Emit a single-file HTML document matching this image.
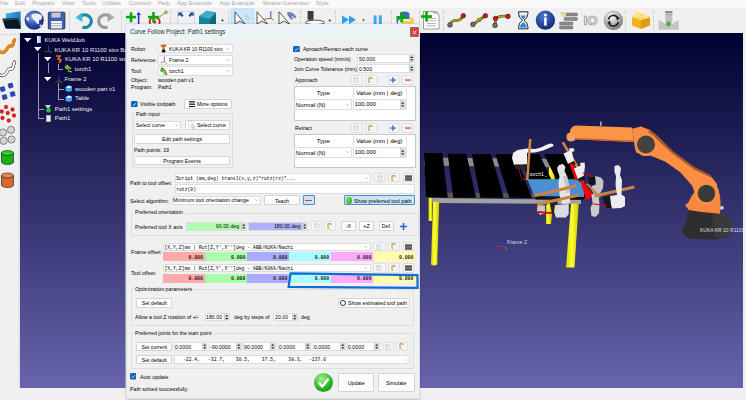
<!DOCTYPE html>
<html><head><meta charset="utf-8">
<style>
*{box-sizing:border-box}
html,body{margin:0;padding:0;width:746px;height:400px;overflow:hidden;background:#f0f0f0;font-family:"Liberation Sans",sans-serif;position:relative}
.a{position:absolute;display:block}
.t{position:absolute;line-height:1;white-space:nowrap;color:#000}
.btn{position:absolute;background:#fdfdfd;border:0.5px solid #d4d4d4;border-radius:1px}
.cmb{position:absolute;background:#ffffff;border:0.5px solid #dcdcdc;border-radius:1px}
.grp{position:absolute;border:0.5px solid #dedede;border-radius:1px}
</style></head><body>

<div class="a" style="left:0;top:0;width:746px;height:8.3px;background:#f9f9f9"></div>
<div class="t" style="left:-1px;top:1.15px;font-size:5.9px;color:#a8a8a8;">File</div>
<div class="t" style="left:15px;top:1.15px;font-size:5.9px;color:#a8a8a8;">Edit</div>
<div class="t" style="left:32.2px;top:1.15px;font-size:5.9px;color:#a8a8a8;">Program</div>
<div class="t" style="left:61.7px;top:1.15px;font-size:5.9px;color:#a8a8a8;">View</div>
<div class="t" style="left:81.8px;top:1.15px;font-size:5.9px;color:#a8a8a8;">Tools</div>
<div class="t" style="left:102px;top:1.15px;font-size:5.9px;color:#a8a8a8;">Utilities</div>
<div class="t" style="left:129px;top:1.15px;font-size:5.9px;color:#a8a8a8;">Connect</div>
<div class="t" style="left:158px;top:1.15px;font-size:5.9px;color:#a8a8a8;">Help</div>
<div class="t" style="left:177px;top:1.15px;font-size:5.9px;color:#a8a8a8;">App Example</div>
<div class="t" style="left:219.5px;top:1.15px;font-size:5.9px;color:#a8a8a8;">App Example</div>
<div class="t" style="left:262.7px;top:1.15px;font-size:5.9px;color:#a8a8a8;">Weave Generator</div>
<div class="t" style="left:315.7px;top:1.15px;font-size:5.9px;color:#a8a8a8;">Style</div>
<div class="a" style="left:0;top:8.3px;width:746px;height:24.7px;background:#f0f0f0"></div>
<div class="a" style="left:69px;top:11px;width:0;height:20px;border-left:0.6px dotted #c4c4c4"></div>
<div class="a" style="left:121px;top:11px;width:0;height:20px;border-left:0.6px dotted #c4c4c4"></div>
<div class="a" style="left:170.4px;top:11px;width:0;height:20px;border-left:0.6px dotted #c4c4c4"></div>
<div class="a" style="left:228px;top:11px;width:0;height:20px;border-left:0.6px dotted #c4c4c4"></div>
<div class="a" style="left:299.6px;top:11px;width:0;height:20px;border-left:0.6px dotted #c4c4c4"></div>
<div class="a" style="left:335px;top:11px;width:0;height:20px;border-left:0.6px dotted #c4c4c4"></div>
<div class="a" style="left:391px;top:11px;width:0;height:20px;border-left:0.6px dotted #c4c4c4"></div>
<div class="a" style="left:418.5px;top:11px;width:0;height:20px;border-left:0.6px dotted #c4c4c4"></div>
<div class="a" style="left:443.3px;top:11px;width:0;height:20px;border-left:0.6px dotted #c4c4c4"></div>
<div class="a" style="left:625.4px;top:11px;width:0;height:20px;border-left:0.6px dotted #c4c4c4"></div>
<div class="a" style="left:652.5px;top:11px;width:0;height:20px;border-left:0.6px dotted #c4c4c4"></div>
<div class="a" style="left:20px;top:32.5px;width:723px;height:355.5px;background:linear-gradient(#000030,#6765ac)"></div>
<div class="a" style="left:20px;top:33px;width:105.5px;height:355px;border-right:0.5px solid #a9aec8"></div>
<div class="a" style="left:0;top:34px;width:19.5px;height:0;border-top:0.6px dotted #c8c8c8"></div>
<div class="a" style="left:18px;top:33px;width:2px;height:355px;background:#e6e6e6"></div>
<svg class="a" style="left:0;top:0" width="746" height="400" viewBox="0 0 746 400">
<defs>
<clipPath id="vp"><rect x="20" y="32.5" width="723" height="355.5"/></clipPath>
<linearGradient id="gLeg" x1="0" y1="0" x2="1" y2="0"><stop offset="0" stop-color="#d8d800"/><stop offset="0.45" stop-color="#ffff30"/><stop offset="1" stop-color="#c8c800"/></linearGradient>
<linearGradient id="gArm" x1="0" y1="0" x2="0" y2="1"><stop offset="0" stop-color="#ffa060"/><stop offset="1" stop-color="#e06a20"/></linearGradient>
</defs>
<g clip-path="url(#vp)">
<!-- back legs -->
<path d="M428.6 198 L432.3 198 L432 221 L428.6 221Z" fill="url(#gLeg)"/>
<!-- back crossbar -->
<path d="M549.5 160 L556 160 L551 224 L546 224Z" fill="url(#gLeg)"/>
<path d="M424 157.5 L560 159 L560 167.6 L424 165.4Z" fill="#8a8a8a"/>
<path d="M426 192.5 L545 193.5 L545 198 L426 197.5Z" fill="#585858"/>
<!-- slats -->
<g fill="#000">
<path d="M423.9 153.1 L442.4 153.1 L447.7 197.8 L426.1 196.9Z"/>
<path d="M447.7 153.7 L466.4 153.7 L476 197.8 L453.3 197.8Z"/>
<path d="M471.7 154 L491 154 L503.7 197.8 L480.4 197.8Z"/>
<path d="M495.3 154 L515 154 L532 198 L509.3 197.8Z"/>
<path d="M519 154 L539.2 154 L560.3 198 L536 198Z"/>
<path d="M544 154 L566 154 L588 198 L565.1 198Z"/>
</g>
<!-- front rail -->
<path d="M432.3 198 L581 199.8 L581 204 L432.3 203Z" fill="#a2a2a2"/>
<!-- front-left leg -->
<path d="M433 202 L439.2 202 L437.2 264.5 Q434 266.5 431 264.5Z" fill="url(#gLeg)"/>
<!-- back-right leg lower part -->
<path d="M546 205 L551 205 L551 223.8 L546 223.8Z" fill="url(#gLeg)"/>
<!-- blue part -->
<path d="M527.5 179.4 L584 179.4 L584 197 L534.4 196.3Z" fill="#4a8ed6"/>
<path d="M527.5 179.4 L584 179.4" stroke="#30c060" stroke-width="0.6"/>
<path d="M534.4 196.5 L584 197.2 L584 199.8 L536 199.6Z" fill="#111"/>
<!-- red little frame + torch label -->
<path d="M518.5 168 L522 179.3 L527 179.3" fill="none" stroke="#e02020" stroke-width="0.7"/>
<text x="529.5" y="176" font-family="Liberation Sans" font-size="5.2" fill="#f0f0f0">torch1</text>
<path d="M545 176.5 L546.5 176.5" stroke="#fff" stroke-width="0.5"/>
<!-- white gripper top-left -->
<path d="M513 153 L517.5 150 L527 148.5 L535 149 L541 147.5 L546 145 L550 143.5 L553 144 L553.5 146 L549 148 L543 150.5 L535 152.5 L527 152.8 L527 164.5 L514 165 L512 158Z" fill="#f2f2f2"/>
<path d="M514.5 164.5 L527 164.5 L526 169 L515.5 169Z" fill="#262626"/>
<!-- vertical stick -->
<path d="M529 139 L531.5 139 L528.5 180 L526 180Z" fill="#d08a40"/>
<!-- upper white clamps and stick -->
<path d="M561.5 142.5 L564 142 L582 172 L579.5 173Z" fill="#d08a40"/>
<path d="M563.5 153.5 L569.5 151 L569 148.5 L573.5 148 L574.5 151 L572 152 L574 161 L568 164Z" fill="#f0f0f0"/>
<path d="M568 164 L574 161 L575.5 164.5 L570 167Z" fill="#151515"/>
<path d="M569.5 163.3 L574 164 L577.7 180.5 L575 180Z" fill="#ff0000"/>
<path d="M574 168.5 L580.7 165.5 L580 163 L584.5 162.5 L585 166 L583.7 176 L577.7 179Z" fill="#f0f0f0"/>
<path d="M577.7 179 L583.7 176 L585.5 180 L579.5 182Z" fill="#151515"/>
<path d="M580 179.5 L583 181 L594.25 196 L586 199.75Z" fill="#ff0000"/>
<path d="M582.25 172.75 L592.75 176.5" stroke="#d00000" stroke-width="0.9"/>
<path d="M588.25 177.25 L596.5 176.5 L594.25 184.75 L589 184Z" fill="#111"/>
<path d="M595 176 L601 177.5 L603.5 181 L603 188 L601 192 L598.5 194.5 L594 194 L591.5 190 L592 186 L596 184.5Z" fill="#c4c4c8"/>
<path d="M591.5 194 L598.5 194.5 L599.5 204 L599 213 L595.5 217 L591.5 216 L590.5 208 L592.5 203Z" fill="#cacace"/>
<path d="M586 184 L588 183.5 L601 196.5 L599 197.5Z" fill="#c88440"/>
<!-- lower clamp parts -->
<path d="M548.75 197.5 L557.5 198 L557.5 216 L552 214Z" fill="#222"/>
<path d="M555 205 L568.75 204 L568.75 214 L566 217.5 L556 217.5 L554 212Z" fill="#dcdce0"/>
<path d="M537.5 205 L545 205.5 L545 213 L540 215 L537 211Z" fill="#c8c8cc"/>
<path d="M537.5 211 L552.5 212.2 L552 214 L538 213Z" fill="#e00000"/>
<path d="M535 203.75 L539 203.5 L538 205.5Z" fill="#e00000"/>
<!-- white clamp 1 upper -->
<path d="M557 168 L559 165 L563 164 L565.5 167 L564.5 171 L567 176 L568.5 183 L570 192 L570 203 L562 204 L559.5 195 L558.5 183 L559.5 176 L558 172Z" fill="#e4e4e8"/>
<path d="M563 176 L567 176 L568.5 183 L570 192 L566 193 L564.5 183Z" fill="#c8c8cc"/>
<!-- front-right leg -->
<path d="M571 203.75 L578.75 203.75 L574.5 267.5 L566 267.5Z" fill="url(#gLeg)"/>
<!-- wooden sticks diag -->
<path d="M534.4 194.2 L576.25 184.2 L576.8 187.2 L534.9 197.2Z" fill="#c88440"/>
<path d="M537 203 L578.75 193.6 L579.3 196.6 L537.5 206Z" fill="#c88440"/>
<path d="M594.25 194.5 L634 185.5 L634.6 188.5 L594.8 197.5Z" fill="#c88440"/>
<!-- right clamp -->
<path d="M614.5 166 L618.5 165 L621 168 L620 175 L622 180 L621.5 194.5 L625 197 L625 206 L621 208 L612 208.5 L610 203 L610 196 L617 195 L615.5 185 L616 176 L614.5 172Z" fill="#ececf0"/>
<path d="M602.5 197.5 L610 196 L611.5 208 L606 208Z" fill="#181818"/>
<path d="M590.5 203.5 L607 205.75" stroke="#e00000" stroke-width="1"/>
<!-- Frame 2 -->
<path d="M505.5 238.8 V246.5" stroke="#1a2aff" stroke-width="0.9"/>
<path d="M495.7 246.5 H505.5" stroke="#e01a1a" stroke-width="0.9"/>
<path d="M505.3 246.8 L506.5 250.5" stroke="#20c020" stroke-width="0.9"/>
<text x="507" y="243.6" font-family="Liberation Sans" font-size="5.4" fill="#d4d4e4">Frame 2</text>
<!-- base -->
<path d="M688.75 210 L720 213.75 L725 213.75 L733.75 222.5 L732.5 227.5 L728.75 236.25 L716.25 239.4 L688.75 238.75 L682.5 232.5 L681.25 228.75 L685 226.25Z" fill="#2e2e2e"/>
<path d="M712.5 213.75 L725 213.75 L733.75 222.5 L732.5 227.5 L728.75 236.25 L716 238 L713 230Z" fill="#3a3a3a"/>
<rect x="720" y="206.25" width="3.5" height="3.2" fill="#d8d8d8"/>
<!-- shoulder -->
<path d="M685 205 L688 203 Q691 196 696 190 L718 188 Q722 200 720 213.75 Q705 213 688.75 210Z" fill="#f58840"/>
<!-- robot lower arm -->
<path d="M636 152.5 L632 128.75 L641 126.5 L650 130 L657.5 136 L672.5 151 L695 167.5 L710 175 L717 184 L718 196 L696 196 L692 185.5 L680 172 L665 161.5 L650 155.5Z" fill="#fb8e42"/>
<path d="M650 130 L657.5 136 L672.5 151 L695 167.5 L710 175 L712 178 L694 169.5 L671 152.5 L656 138.5 L648 132Z" fill="#8a4a18" opacity="0.75"/>
<circle cx="706.5" cy="193" r="12" fill="#fb8e42"/>
<circle cx="706.5" cy="193.5" r="8.75" fill="#3a3a3a"/>
<!-- forearm -->
<path d="M576 125.5 L632 127.5 L634 142 L576.4 139.2 Q569 137 570 131 Q571 126 576 125.5Z" fill="#fb9546"/>
<path d="M576.4 138 L633 140.5 L634 142 L576.4 139.5Z" fill="#c86a2a"/>
<path d="M567.5 133.5 Q571 131.5 574 133.5 L575.5 140 Q571.5 142.5 567.5 140.5 Q565.5 137 567.5 133.5Z" fill="#f8a060"/>
<rect x="600" y="121.5" width="1.6" height="4.3" fill="#b0b0b0"/>
<!-- elbow -->
<circle cx="646" cy="144.5" r="11.5" fill="#fb8e42"/>
<circle cx="646" cy="144.5" r="9" fill="#424242"/>
<text x="700" y="232" font-family="Liberation Sans" font-size="5" fill="#dcdce6">KUKA KR 10 R1100</text>
</g>
</svg>
<svg class="a" style="left:0;top:0" width="746" height="33" viewBox="0 0 746 33">
<defs>
<linearGradient id="gFold" x1="0" y1="0" x2="1" y2="1"><stop offset="0" stop-color="#3fc3f5"/><stop offset="1" stop-color="#0a4a8a"/></linearGradient>
<radialGradient id="gGlobe" cx="0.4" cy="0.35" r="0.7"><stop offset="0" stop-color="#8aa6e6"/><stop offset="0.6" stop-color="#2a4aa8"/><stop offset="1" stop-color="#13266e"/></radialGradient>
<radialGradient id="gInfo" cx="0.4" cy="0.3" r="0.7"><stop offset="0" stop-color="#4a78d0"/><stop offset="1" stop-color="#0c2a78"/></radialGradient>
<radialGradient id="gRef" cx="0.4" cy="0.3" r="0.7"><stop offset="0" stop-color="#ffffff"/><stop offset="1" stop-color="#7a7a7a"/></radialGradient>
</defs>
<!-- folder -->
<path d="M5.5 13.5 L20.5 11.3 L21 27.5 L7 28.8Z" fill="url(#gFold)"/>
<path d="M2.3 18.8 L18 18 L20.8 28.9 L5.5 28.6Z" fill="#0b1824"/>
<path d="M2.3 18.8 L18 18 L18.5 19.5 L3 20.5Z" fill="#2a4a60"/>
<!-- globe -->
<circle cx="34.2" cy="20.2" r="9.6" fill="url(#gGlobe)"/>
<path d="M31.5 15 Q33 13 36 13.5 Q39 13 41.5 15 Q42.5 17 41.5 19 Q40.5 20.5 39.5 19.5 Q38.5 21 39 23.5 Q37.5 25 36.5 23 Q35.5 21 34.5 20.5 Q33 19.5 32.5 18 Q31 17 31.5 15Z" fill="#eef2f8"/>
<path d="M26 18 Q27.5 16.5 29 17.5 Q29.5 19.5 28.5 21.5 Q27 21 26 18Z" fill="#dfe6f4"/>
<path d="M39.5 25 Q41 24 42 25.5 Q41 27 39.8 26.5Z" fill="#dfe6f4"/>
<!-- floppy -->
<rect x="48.3" y="12.2" width="16.6" height="16.8" rx="1" fill="#3d5fb0" stroke="#1b2c5a" stroke-width="0.8"/>
<rect x="51.5" y="12.6" width="9" height="5" fill="#c8c8c8"/>
<rect x="51" y="21" width="11" height="7.4" fill="#f2f2f2"/>
<rect x="51" y="23.3" width="11" height="0.6" fill="#888"/><rect x="51" y="25.6" width="11" height="0.6" fill="#888"/>
<!-- undo -->
<path d="M79.5 18 A6.3 6.3 0 1 1 82.5 27" fill="none" stroke="#178ea0" stroke-width="3.2"/>
<path d="M75.5 17.5 L82 12.5 L82.5 22Z" fill="#3db8d8"/>
<!-- redo -->
<path d="M110.5 18 A6.3 6.3 0 1 0 107.5 27" fill="none" stroke="#9a9a9a" stroke-width="3.2"/>
<path d="M114.5 17.5 L108 12.5 L107.5 22Z" fill="#a8a8a8"/>
<!-- green plus + blue arrow -->
<rect x="125.9" y="15.8" width="10.3" height="2.6" fill="#0aa70a"/><rect x="129.8" y="12.4" width="2.6" height="9.8" fill="#0aa70a"/>
<rect x="137.9" y="14" width="1.5" height="10" fill="#1a2ed8"/><path d="M136.5 15 L138.65 11.7 L140.8 15Z" fill="#1a2ed8"/>
<!-- plus target -->
<circle cx="154.7" cy="22" r="5" fill="none" stroke="#d81818" stroke-width="1.8"/>
<circle cx="154.7" cy="22" r="1.6" fill="#d81818"/>
<rect x="148" y="15.8" width="11" height="2.6" fill="#0aa70a"/><rect x="152.2" y="12" width="2.6" height="10.5" fill="#0aa70a"/>
<path d="M155.4 20 L165.5 12.6" stroke="#4c9a1a" stroke-width="0.8"/><circle cx="166" cy="12.2" r="1.5" fill="#9ad040" stroke="#4c8a1a" stroke-width="0.4"/>
<!-- fit -->
<rect x="177.5" y="11.3" width="17" height="14" fill="#eef2f4" stroke="#c0c0c0" stroke-width="0.5"/>
<path d="M178.3 12.6 L182.5 12.6 L181.6 13.6 L183.6 15.6 L182 17 L180 15 L178.3 16.6Z" fill="#1e48a0"/>
<path d="M193.7 12.6 L189.5 12.6 L190.4 13.6 L188.4 15.6 L190 17 L192 15 L193.7 16.6Z" fill="#1e48a0"/>
<!-- cube -->
<path d="M199 16.4 L206.5 11 L216 12.7 L209.8 19Z" fill="#3ab0c8"/>
<path d="M199 16.4 L209.8 19 L209.8 27 L199 27Z" fill="#10889c"/>
<path d="M209.8 19 L216 12.7 L216 27 L209.8 27Z" fill="#0c6c80"/>
<path d="M199 16.4 L206.5 11 L216 12.7 L209.8 19Z M209.8 19 V27" fill="none" stroke="#0a5060" stroke-width="0.35"/>
<path d="M221 19.8 L224 19.8 L222.5 21.8Z" fill="#222"/>
<!-- selected -->
<rect x="231.2" y="8.8" width="22.6" height="22" rx="0.8" fill="#cce8ff" stroke="#99d1ff" stroke-width="0.5"/>
<path d="M235 11.8 L235 24 L240 21 L245.6 24.5Z" fill="#fff" stroke="#111" stroke-width="0.7"/>
<path d="M246.4 14 L246.4 19.6 L247.8 18.4 L249.8 19.8Z" fill="#ddd" stroke="#999" stroke-width="0.3"/>
<!-- arrow + frame -->
<path d="M257 11.8 L257 24 L262 21 L268 24.5Z" fill="#fff" stroke="#111" stroke-width="0.7"/>
<path d="M270.8 11.2 L270.8 18.5" stroke="#3030d0" stroke-width="0.9"/><path d="M264 19.3 L270.8 18.3" stroke="#d83030" stroke-width="0.9"/><path d="M270.8 18.3 L273.7 20" stroke="#20a040" stroke-width="0.9"/>
<!-- arrow + gripper -->
<path d="M279 11.8 L279 24 L284 21 L290 24.5Z" fill="#fff" stroke="#111" stroke-width="0.7"/>
<path d="M287 12.5 Q291 11 294 14 L296.5 17 L295 18.5 L291.5 15.5 L293 19 L291 19.8 L287.5 15Z" fill="#7080b8"/>
<!-- tool -->
<rect x="307.6" y="11" width="5.9" height="8.8" fill="#3a3a3a"/><rect x="308.6" y="19.5" width="3.9" height="1.5" fill="#666"/>
<ellipse cx="315" cy="22.4" rx="9.6" ry="2.2" fill="#fff" stroke="#111" stroke-width="0.7"/>
<path d="M328.3 19.8 L331.2 19.8 L329.75 21.8Z" fill="#222"/>
<!-- play/pause -->
<path d="M342 15.4 L349 19.7 L342 24Z M349 15.4 L356 19.7 L349 24Z" fill="#2a9ef0"/>
<path d="M362.2 19.5 L364.8 19.5 L363.5 21.3Z" fill="#222"/>
<rect x="373.6" y="15.4" width="3" height="9" fill="#3aa8f0"/><rect x="378.8" y="15.4" width="3" height="9" fill="#3aa8f0"/>
<!-- python + -->
<path d="M400 14 Q400 11.5 404 11.5 Q409.5 11.5 409.5 14 L409.5 19 L402 19 Q398 19 398 22 L398 24 Q396.5 24 396.5 20 Q396.5 16 400 16Z" fill="#3a70b0"/>
<path d="M410 17 Q414 17 414 21 Q414 26 409 26 L405 26 Q402 26 402 24 L402 21 L409 21 Q410 21 410 17Z" fill="#f4d44a"/>
<rect x="396.5" y="16" width="10.3" height="2.6" fill="#0aa70a"/><rect x="400.4" y="12" width="2.6" height="10.5" fill="#0aa70a"/>
<!-- doc + -->
<path d="M423.5 11.5 L435.5 11.5 L439 15 L439 29 L423.5 29Z" fill="#fafafa" stroke="#444" stroke-width="0.5"/>
<path d="M433 11.5 L437.5 11.5 L439 13.5 L433 13.5Z" fill="#b8a0e0"/>
<rect x="427" y="18" width="9" height="0.7" fill="#999"/><rect x="427" y="20.5" width="9" height="0.7" fill="#999"/><rect x="427" y="23" width="9" height="0.7" fill="#999"/><rect x="427" y="25.5" width="9" height="0.7" fill="#999"/>
<rect x="421" y="15.2" width="11" height="2.6" fill="#0aa70a"/><rect x="425.2" y="11.5" width="2.6" height="10" fill="#0aa70a"/>
<!-- curves -->
<g fill="none" stroke-linecap="round">
<path d="M450 24.5 Q452 20 456 20.5 Q460 21 463.3 15.7" stroke="#3a3a10" stroke-width="2.6"/>
<path d="M473 24.4 L485.4 15.7" stroke="#3a3a10" stroke-width="2.6"/>
<path d="M495 25 L495.5 18.5 Q500 15 508 16.4" stroke="#3a3a10" stroke-width="2.6"/>
<path d="M450 24.5 Q452 20 456 20.5 Q460 21 463.3 15.7" stroke="#b8a818" stroke-width="1.6"/>
<path d="M473 24.4 L485.4 15.7" stroke="#b8a818" stroke-width="1.6"/>
<path d="M495 25 L495.5 18.5 Q500 15 508 16.4" stroke="#b8a818" stroke-width="1.6"/>
</g>
<path d="M477.5 18.5 L482.5 17.5 L480 22Z" fill="#b8a818" stroke="#3a3a10" stroke-width="0.4"/>
<g stroke="#222" stroke-width="0.6">
<circle cx="450" cy="24.9" r="2.4" fill="#707070"/><circle cx="463.3" cy="15.7" r="2.3" fill="#d81010"/>
<circle cx="473" cy="24.4" r="2.4" fill="#707070"/><circle cx="485.4" cy="15.7" r="2.3" fill="#d81010"/>
<circle cx="495" cy="25.4" r="2.4" fill="#707070"/><circle cx="495.5" cy="18.5" r="2.3" fill="#d81010"/><circle cx="508" cy="16.4" r="2.3" fill="#d81010"/>
</g>
<!-- hourglass -->
<path d="M518.5 11.8 L528 11.8 L528 13 Q528 18 524 20.2 Q528 22.5 528 27.5 L528 28.8 L518.5 28.8 L518.5 27.5 Q518.5 22.5 522.5 20.2 Q518.5 18 518.5 13Z" fill="#e8f4fc" stroke="#111" stroke-width="0.9"/>
<path d="M520.5 15.5 L526 15.5 Q525 18.5 523.25 19.5 Q521.5 18.5 520.5 15.5Z M523.25 22 Q526.5 24 527 27.5 L519.5 27.5 Q520 24 523.25 22Z" fill="#2a8ad8"/>
<!-- info -->
<circle cx="545.4" cy="20.2" r="9.6" fill="url(#gInfo)"/>
<circle cx="545.4" cy="15" r="1.5" fill="#fff"/><rect x="544.1" y="17.6" width="2.6" height="8" fill="#fff"/>
<!-- list -->
<rect x="564" y="13" width="13.5" height="3" rx="1" fill="#8a8a8a" stroke="#555" stroke-width="0.4"/>
<rect x="564" y="17.5" width="13.5" height="3" rx="1" fill="#8a8a8a" stroke="#555" stroke-width="0.4"/>
<rect x="559.5" y="22" width="13.5" height="3" rx="1" fill="#8a8a8a" stroke="#555" stroke-width="0.4"/>
<rect x="559.5" y="26" width="13.5" height="3" rx="1" fill="#8a8a8a" stroke="#555" stroke-width="0.4"/>
<path d="M560 12 L566 12 L566 16 Q563 18 561 15Z" fill="#e8d8a0"/>
<!-- IO -->
<text x="583.5" y="25.3" font-family="Liberation Sans" font-weight="bold" font-size="12" fill="#fff" stroke="#777" stroke-width="0.6" textLength="14" lengthAdjust="spacingAndGlyphs">IO</text>
<!-- refresh -->
<circle cx="613.4" cy="20.5" r="9.5" fill="url(#gRef)" stroke="#888" stroke-width="0.4"/>
<path d="M608.5 19.5 A5 5 0 0 1 618 18.5" fill="none" stroke="#222" stroke-width="1.7"/><path d="M618.3 22 A5 5 0 0 1 608.8 23" fill="none" stroke="#222" stroke-width="1.7"/>
<path d="M616 16.5 L620 18 L617 20.5Z M611 24.5 L607 23 L610 20.5Z" fill="#222"/>
<!-- box -->
<path d="M632 17 L641 20 L641 29 L632 25.5Z" fill="#f0b020"/><path d="M641 20 L650 17 L650 25.5 L641 29Z" fill="#e09a10"/>
<path d="M632 17 L637 12 L645 14.5 L650 17 L641 20Z" fill="#ffd860"/>
<path d="M637 12 L641 16 L634 18Z M645 14.5 L641 16 L649 19Z" fill="#ffe890"/>
<!-- tool2 -->
<rect x="665.3" y="11" width="7" height="12" fill="#c0c0c0"/><rect x="665.3" y="11" width="7" height="2" fill="#8a8a8a"/><rect x="665.3" y="14.5" width="7" height="0.6" fill="#999"/>
<path d="M658.7 20 L668.8 26 L678.7 20 L678.7 29.8 L658.7 29.8Z" fill="#c4c4c4"/>
<path d="M665.5 24 L668.5 21 L671.5 24 L668.5 27Z" fill="#40b040"/>
</svg>
<svg class="a" style="left:0;top:34px" width="20" height="160" viewBox="0 34 20 160">
<path d="M0.5 52 Q4 54 7 49 Q9 45 11 46 Q13 47 13.5 42 L14.5 40" fill="none" stroke="#c85a00" stroke-width="3.2" stroke-linecap="round"/>
<path d="M0.5 52 Q4 54 7 49 Q9 45 11 46 Q13 47 13.5 42 L14.5 40" fill="none" stroke="#f08a10" stroke-width="2.2" stroke-linecap="round"/>
<path d="M0.8 75 Q4 77 7 72 Q9 68 11 69 Q13 70 13.5 65 L14.5 62" fill="none" stroke="#333" stroke-width="3.2" stroke-linecap="round"/>
<path d="M0.8 75 Q4 77 7 72 Q9 68 11 69 Q13 70 13.5 65 L14.5 62" fill="none" stroke="#fff" stroke-width="2" stroke-linecap="round"/>
<g fill="#2a48d0" stroke="#0a1a80" stroke-width="0.5">
<rect x="0.5" y="87" width="4.2" height="4.2" transform="rotate(-15 2.6 89)"/>
<rect x="8.5" y="83.5" width="4.2" height="4.2" transform="rotate(-15 10.6 85.6)"/>
<rect x="2.5" y="95" width="4.2" height="4.2" transform="rotate(-15 4.6 97)"/>
<rect x="10.5" y="92" width="4.2" height="4.2" transform="rotate(-15 12.6 94)"/>
</g>
<g fill="#e81c1c" stroke="#901010" stroke-width="0.3"><circle cx="6" cy="107" r="1.9"/><circle cx="12.5" cy="109.5" r="1.9"/><circle cx="1.8" cy="111.5" r="1.9"/><circle cx="7.8" cy="113" r="1.9"/><circle cx="14" cy="115.5" r="1.9"/><circle cx="2.5" cy="118" r="1.9"/><circle cx="8.8" cy="120.5" r="1.9"/></g>
<g fill="#d4d4d4" stroke="#444" stroke-width="0.6"><circle cx="3" cy="132.5" r="3.6"/><circle cx="11" cy="129.8" r="3.6"/><circle cx="3.6" cy="140.8" r="3.6"/><circle cx="11.5" cy="139.5" r="3.6"/></g>
<path d="M1.5 153 L1.5 162 A6 2.5 0 0 0 13.5 162 L13.5 153Z" fill="#18b018" stroke="#111" stroke-width="0.6"/>
<ellipse cx="7.5" cy="153" rx="6" ry="2.5" fill="#30d030" stroke="#111" stroke-width="0.6"/>
<path d="M1.5 175.5 L1.5 185 A6 2.5 0 0 0 13.5 185 L13.5 175.5Z" fill="#d86a30" stroke="#111" stroke-width="0.6"/>
<ellipse cx="7.5" cy="175.5" rx="6" ry="2.5" fill="#e88a50" stroke="#111" stroke-width="0.6"/>
</svg>
<div class="a" style="left:20px;top:33px;width:105.5px;height:355px;overflow:hidden">
</div>
<svg class="a" style="left:24px;top:37.70px" width="7.2" height="4.2" viewBox="0 0 7.2 4.2"><path d="M0 0 L7.2 0 L3.6 4.2Z" fill="#fff"/></svg>
<div class="a" style="left:36.5px;top:36.3px;width:4.5px;height:7px;background:linear-gradient(90deg,#fff,#8ab0e0)"></div>
<div class="t" style="left:44.5px;top:37.85px;font-size:5.9px;color:#eeeef4">KUKA WeldJob</div>
<svg class="a" style="left:34px;top:47.40px" width="7.2" height="4.2" viewBox="0 0 7.2 4.2"><path d="M0 0 L7.2 0 L3.6 4.2Z" fill="#fff"/></svg>
<div class="t" style="left:54.6px;top:47.55px;font-size:5.9px;color:#eeeef4">KUKA KR 10 R1100 sixx Base</div>
<svg class="a" style="left:44px;top:45px" width="9" height="9" viewBox="0 0 9 9"><path d="M4.5 0.5 V6" stroke="#3a3aff" stroke-width="0.8"/><path d="M0.5 7 L4.5 6" stroke="#e03030" stroke-width="0.8"/><path d="M4.5 6 L8 7.5" stroke="#30b030" stroke-width="0.8"/></svg>
<svg class="a" style="left:44px;top:57.30px" width="7.2" height="4.2" viewBox="0 0 7.2 4.2"><path d="M0 0 L7.2 0 L3.6 4.2Z" fill="#fff"/></svg>
<div class="t" style="left:65px;top:57.45px;font-size:5.9px;color:#eeeef4">KUKA KR 10 R1100 sixx</div>
<svg class="a" style="left:55px;top:55px" width="7" height="9" viewBox="0 0 7 9"><path d="M1 1 L5 1 L3 4 L6 5 L4 8" fill="none" stroke="#e07010" stroke-width="1.6"/></svg>
<svg class="a" style="left:63.5px;top:64px" width="9" height="9" viewBox="0 0 9 9"><path d="M1 2 L5 6 M2.5 1 L7 5 M4 7 L8 8" stroke="#d0d020" stroke-width="1.1"/><circle cx="2.5" cy="3.5" r="1.7" fill="#40c040"/></svg>
<div class="t" style="left:74.8px;top:66.95px;font-size:5.9px;color:#eeeef4">torch1</div>
<svg class="a" style="left:44.3px;top:76.60px" width="7.2" height="4.2" viewBox="0 0 7.2 4.2"><path d="M0 0 L7.2 0 L3.6 4.2Z" fill="#fff"/></svg>
<div class="t" style="left:64.5px;top:76.85px;font-size:5.9px;color:#eeeef4">Frame 2</div>
<svg class="a" style="left:54.8px;top:74.5px" width="8" height="9" viewBox="0 0 8 9"><path d="M4 0.5 V6" stroke="#3a3aff" stroke-width="0.8"/><path d="M0.5 7 L4 6" stroke="#e03030" stroke-width="0.8"/><path d="M4 6 L7.5 7.5" stroke="#30b030" stroke-width="0.8"/></svg>
<svg class="a" style="left:64.5px;top:85.00px" width="7.5" height="7.5" viewBox="0 0 8 8"><path d="M0.5 2.5 L4 0.5 L7.5 2 L7.5 6 L4 7.5 L0.5 6Z" fill="#3aa0f0"/><path d="M0.5 2.5 L4 0.5 L7.5 2 L4 3.5Z" fill="#d8f0ff"/></svg>
<div class="t" style="left:75px;top:86.65px;font-size:5.9px;color:#eeeef4">wooden part v1</div>
<svg class="a" style="left:64.5px;top:94.70px" width="7.5" height="7.5" viewBox="0 0 8 8"><path d="M0.5 2.5 L4 0.5 L7.5 2 L7.5 6 L4 7.5 L0.5 6Z" fill="#3aa0f0"/><path d="M0.5 2.5 L4 0.5 L7.5 2 L4 3.5Z" fill="#d8f0ff"/></svg>
<div class="t" style="left:75px;top:96.35px;font-size:5.9px;color:#eeeef4">Table</div>
<svg class="a" style="left:44.3px;top:104px" width="8" height="9" viewBox="0 0 8 9"><path d="M1 1 L7 1 L5 4 L3 4Z" fill="#ccc"/><circle cx="4.5" cy="6.3" r="2.4" fill="#20c030"/></svg>
<div class="t" style="left:54.8px;top:106.55px;font-size:5.9px;color:#eeeef4">Path1 settings</div>
<div class="a" style="left:45.5px;top:114.5px;width:5px;height:7px;background:#e8e8e8;border:0.4px solid #aaa"></div>
<div class="t" style="left:54.8px;top:115.85px;font-size:5.9px;color:#eeeef4">Path1</div>
<div class="a" style="left:37.5px;top:53px;width:0;height:65.3px;border-left:0.6px solid #9a9ab8"></div>
<div class="a" style="left:37.5px;top:108.6px;width:6px;height:0;border-top:0.6px solid #9a9ab8"></div>
<div class="a" style="left:37.5px;top:118px;width:6px;height:0;border-top:0.6px solid #9a9ab8"></div>
<div class="a" style="left:48px;top:63px;width:0;height:10px;border-left:0.6px solid #9a9ab8"></div>
<div class="a" style="left:58.2px;top:64px;width:0;height:5px;border-left:0.6px solid #9a9ab8"></div>
<div class="a" style="left:58.2px;top:69px;width:5px;height:0;border-top:0.6px solid #9a9ab8"></div>
<div class="a" style="left:58.2px;top:83px;width:0;height:15.5px;border-left:0.6px solid #9a9ab8"></div>
<div class="a" style="left:58.2px;top:88.8px;width:5.5px;height:0;border-top:0.6px solid #9a9ab8"></div>
<div class="a" style="left:58.2px;top:98.5px;width:5.5px;height:0;border-top:0.6px solid #9a9ab8"></div>
<div class="a" style="left:125.5px;top:24px;width:294.5px;height:375px;background:#f0f0f0;border:0.5px solid #d8dee2;border-top-color:#e8eef2;border-radius:1.5px 1.5px 0 0;box-shadow:0 0.5px 2.5px rgba(0,0,0,.22)"></div>
<div class="a" style="left:126px;top:24.5px;width:293.5px;height:14.7px;background:#edf4f7"></div>
<div class="t" style="left:130px;top:29.2px;font-size:6.6px;transform:scaleX(0.895);transform-origin:left center;color:#2a2a2a">Curve Follow Project: Path1 settings</div>
<div class="a" style="left:409.5px;top:27.3px;width:9.6px;height:10px;background:#c94f4f;border-radius:0.8px"></div>
<svg class="a" style="left:411.9px;top:29.8px" width="5" height="5" viewBox="0 0 5 5"><path d="M0.9 0.9 L4.1 4.1 M4.1 0.9 L0.9 4.1" stroke="#fff" stroke-width="0.8"/></svg>
<div class="t" style="left:131.4px;top:46.78px;font-size:5.880px;transform:scaleX(0.8929);transform-origin:left center;">Robot:</div>
<div class="cmb" style="left:157.8px;top:43.9px;width:74.80px;height:9.60px;"></div>
<div class="t" style="left:169px;top:46.93px;font-size:5.544px;transform:scaleX(0.8929);transform-origin:left center;">KUKA KR 10 R1100 sixx</div>
<svg class="a" style="left:226.40px;top:47.85px" width="3.4" height="2.3" viewBox="0 0 3.4 2.3"><path d="M0.3 0.3 L1.7 1.7 L3.1 0.3" fill="none" stroke="#8a8a8a" stroke-width="0.5"/></svg>
<div class="t" style="left:131.4px;top:57.98px;font-size:5.880px;transform:scaleX(0.8929);transform-origin:left center;">Reference:</div>
<div class="cmb" style="left:157.8px;top:55px;width:74.80px;height:9.70px;"></div>
<div class="t" style="left:169px;top:57.93px;font-size:5.880px;transform:scaleX(0.8929);transform-origin:left center;">Frame 2</div>
<svg class="a" style="left:226.40px;top:59.00px" width="3.4" height="2.3" viewBox="0 0 3.4 2.3"><path d="M0.3 0.3 L1.7 1.7 L3.1 0.3" fill="none" stroke="#8a8a8a" stroke-width="0.5"/></svg>
<div class="t" style="left:131.4px;top:69.08px;font-size:5.880px;transform:scaleX(0.8929);transform-origin:left center;">Tool:</div>
<div class="cmb" style="left:157.8px;top:66px;width:74.80px;height:10.00px;"></div>
<div class="t" style="left:169px;top:69.08px;font-size:5.880px;transform:scaleX(0.8929);transform-origin:left center;">torch1</div>
<svg class="a" style="left:226.40px;top:70.15px" width="3.4" height="2.3" viewBox="0 0 3.4 2.3"><path d="M0.3 0.3 L1.7 1.7 L3.1 0.3" fill="none" stroke="#8a8a8a" stroke-width="0.5"/></svg>
<svg class="a" style="left:160.3px;top:44.4px" width="7" height="8.6" viewBox="0 0 7 8.6"><path d="M0.8 1.6 Q2 0.6 5 0.8 Q6.5 1 6.3 2.2 L3.8 3 L4.8 4.6 Q3 5.4 2.2 4.2 L3.2 3 L1 2.8Z" fill="#e06a20" stroke="#8a3a10" stroke-width="0.3"/><ellipse cx="3.6" cy="6.9" rx="2" ry="1.6" fill="#1a1410"/><path d="M2.6 4.8 L4.6 4.8 L4.4 5.8 L2.8 5.8Z" fill="#c05818"/></svg>
<svg class="a" style="left:160.3px;top:55.8px" width="7" height="8.2" viewBox="0 0 7 8.2"><path d="M4.3 0.3 V5.6" stroke="#5050e8" stroke-width="0.8"/><path d="M0.3 7 L4.3 5.6" stroke="#e05050" stroke-width="0.8"/><path d="M4.3 5.6 L6.8 7.8" stroke="#40a060" stroke-width="0.8"/></svg>
<svg class="a" style="left:160.3px;top:66.6px" width="7.5" height="8.6" viewBox="0 0 7.5 8.6"><path d="M0.8 1.2 Q3.5 0.8 5 3.5 L7 7.8" fill="none" stroke="#6a6a18" stroke-width="1.2"/><path d="M0.6 3.2 Q3 3.4 4.2 5.8 L5.8 8.3" fill="none" stroke="#8a8a20" stroke-width="1.2"/><circle cx="2" cy="3.5" r="1.7" fill="#30c030"/></svg>
<div class="t" style="left:131.4px;top:78.08px;font-size:5.880px;transform:scaleX(0.8929);transform-origin:left center;">Object:</div>
<div class="t" style="left:157.6px;top:78.08px;font-size:5.880px;transform:scaleX(0.8929);transform-origin:left center;">wooden part v1</div>
<div class="t" style="left:131.4px;top:85.08px;font-size:5.880px;transform:scaleX(0.8929);transform-origin:left center;">Program:</div>
<div class="t" style="left:157.6px;top:85.08px;font-size:5.880px;transform:scaleX(0.8929);transform-origin:left center;">Path1</div>
<svg class="a" style="left:131.2px;top:100.5px" width="6.60" height="6.50" viewBox="0 0 10 10" preserveAspectRatio="none"><rect x="0" y="0" width="10" height="10" rx="2" fill="#1565c0"/><path d="M2.6 5.2 L4.3 6.9 L7.5 3.2" fill="none" stroke="#fff" stroke-width="1"/></svg>
<div class="t" style="left:140.4px;top:102.08px;font-size:5.880px;transform:scaleX(0.8929);transform-origin:left center;">Visible toolpath</div>
<div class="btn" style="left:183.7px;top:99px;width:48.50px;height:9.90px;"></div>
<svg class="a" style="left:188.6px;top:100.6px" width="6.2" height="6.4" viewBox="0 0 6.2 6.4"><rect x="0" y="0.2" width="6.2" height="1.2" fill="#111"/><rect x="0" y="2.6" width="6.2" height="1.2" fill="#111"/><rect x="0" y="5" width="6.2" height="1.2" fill="#111"/></svg>
<div class="t" style="left:196.5px;top:102.08px;font-size:5.880px;transform:scaleX(0.8929);transform-origin:left center;">More options</div>
<div class="grp" style="left:131.8px;top:113.4px;width:101.2px;height:54.8px"></div>
<div class="a" style="left:134.5px;top:111px;width:24px;height:5px;background:#f0f0f0"></div>
<div class="t" style="left:135.6px;top:111.67px;font-size:5.880px;transform:scaleX(0.8929);transform-origin:left center;">Path input</div>
<div class="cmb" style="left:134px;top:120.5px;width:47.00px;height:9.20px;"></div>
<div class="t" style="left:135.5px;top:123.17px;font-size:5.880px;transform:scaleX(0.8929);transform-origin:left center;">Select curve</div>
<svg class="a" style="left:174.80px;top:124.25px" width="3.4" height="2.3" viewBox="0 0 3.4 2.3"><path d="M0.3 0.3 L1.7 1.7 L3.1 0.3" fill="none" stroke="#8a8a8a" stroke-width="0.5"/></svg>
<div class="btn" style="left:184.8px;top:119.6px;width:45.20px;height:10.70px;"></div>
<svg class="a" style="left:188px;top:121px" width="8" height="8" viewBox="0 0 8 8"><path d="M0.5 0.5 H4 L5.5 2 V6 H0.5Z" fill="#f5f5f5" stroke="#bbb" stroke-width="0.4"/><path d="M4 3.5 L4 7.5 L5 6.6 L5.8 7.8 L6.4 7.5 L5.7 6.3 L6.9 6.2Z" fill="#fff" stroke="#777" stroke-width="0.35"/></svg>
<div class="t" style="left:197px;top:123.28px;font-size:5.880px;transform:scaleX(0.8929);transform-origin:left center;">Select curve</div>
<div class="btn" style="left:134.4px;top:134px;width:96.10px;height:9.60px;"></div>
<div class="t" style="left:134.4px;width:96.10px;text-align:center;top:136.88px;font-size:5.880px;transform:scaleX(0.8929);transform-origin:center center;">Edit path settings</div>
<div class="t" style="left:134px;top:148.07px;font-size:5.880px;transform:scaleX(0.8929);transform-origin:left center;">Path points: 19</div>
<div class="btn" style="left:134.4px;top:155.9px;width:96.10px;height:9.60px;"></div>
<div class="t" style="left:134.4px;width:96.10px;text-align:center;top:158.77px;font-size:5.880px;transform:scaleX(0.8929);transform-origin:center center;">Program Events</div>
<svg class="a" style="left:293.3px;top:45.6px" width="6.80" height="6.70" viewBox="0 0 10 10" preserveAspectRatio="none"><rect x="0" y="0" width="10" height="10" rx="2" fill="#1565c0"/><path d="M2.6 5.2 L4.3 6.9 L7.5 3.2" fill="none" stroke="#fff" stroke-width="1"/></svg>
<div class="t" style="left:302.5px;top:47.08px;font-size:5.880px;transform:scaleX(0.8929);transform-origin:left center;">Aproach/Retract each curve</div>
<div class="t" style="left:293.5px;top:56.68px;font-size:5.880px;transform:scaleX(0.8929);transform-origin:left center;">Operation speed (mm/s)</div>
<div class="cmb" style="left:357px;top:54px;width:58.00px;height:9.30px;background:#ffffff;"></div>
<div class="t" style="left:358.5px;top:56.73px;font-size:5.880px;transform:scaleX(0.8929);transform-origin:left center;">50.000</div>
<div class="a" style="left:409.00px;top:54.50px;width:5.5px;height:8.30px;background:#dedede;border-left:0.4px solid #cfcfcf"></div>
<svg class="a" style="left:409.00px;top:54.00px" width="6" height="9.30" viewBox="0 0 6 9.30"><path d="M1.25 3.95 L2.75 2.25 L4.25 3.95Z M1.25 5.35 L2.75 7.05 L4.25 5.35Z" fill="#222"/></svg>
<div class="t" style="left:293.5px;top:66.78px;font-size:5.880px;transform:scaleX(0.8929);transform-origin:left center;">Join Curve Tolerance (mm)</div>
<div class="cmb" style="left:357px;top:64px;width:58.00px;height:9.20px;background:#ffffff;"></div>
<div class="t" style="left:358.5px;top:66.67px;font-size:5.880px;transform:scaleX(0.8929);transform-origin:left center;">0.500</div>
<div class="a" style="left:409.00px;top:64.50px;width:5.5px;height:8.20px;background:#dedede;border-left:0.4px solid #cfcfcf"></div>
<svg class="a" style="left:409.00px;top:64.00px" width="6" height="9.20" viewBox="0 0 6 9.20"><path d="M1.25 3.90 L2.75 2.20 L4.25 3.90Z M1.25 5.30 L2.75 7.00 L4.25 5.30Z" fill="#222"/></svg>
<div class="t" style="left:295px;top:78.08px;font-size:5.880px;transform:scaleX(0.8929);transform-origin:left center;">Approach</div>
<div class="btn" style="left:350.8px;top:75.2px;width:11.20px;height:9.60px;background:#f6f6f6;border-color:#e0e0e0;"></div>
<svg class="a" style="left:353.40px;top:77.00px" width="6" height="6" viewBox="0 0 6 6"><rect x="0.7" y="0.6" width="3.6" height="4" fill="#e8e8e8" stroke="#c8c8c8" stroke-width="0.4"/><rect x="1.7" y="1.6" width="3.6" height="4" fill="#ececec" stroke="#c4c4c4" stroke-width="0.4"/></svg>
<div class="btn" style="left:365px;top:75.2px;width:11.60px;height:9.60px;background:#f6f6f6;border-color:#e0e0e0;"></div>
<svg class="a" style="left:367.80px;top:76.80px" width="6" height="6.5" viewBox="0 0 6 6.5"><rect x="0.8" y="0.8" width="3.6" height="5" fill="#f1c48a" stroke="#c8843a" stroke-width="0.5"/><rect x="2.2" y="2" width="3" height="4" fill="#fff" stroke="#d0d0d0" stroke-width="0.4"/><rect x="1.5" y="0.3" width="2" height="1" fill="#999"/></svg>
<div class="btn" style="left:388px;top:75.2px;width:10.70px;height:9.60px;background:#f6f6f6;border-color:#e0e0e0;"></div>
<svg class="a" style="left:390.35px;top:77.00px" width="6" height="6" viewBox="0 0 6 6"><rect x="0.2" y="2.4" width="5.6" height="1.3" fill="#1f6fc5"/><rect x="2.35" y="0.2" width="1.3" height="5.6" fill="#1f6fc5"/></svg>
<div class="btn" style="left:402px;top:75.2px;width:11.00px;height:9.60px;background:#f6f6f6;border-color:#e0e0e0;"></div>
<svg class="a" style="left:404.50px;top:77.00px" width="6" height="6" viewBox="0 0 6 6"><rect x="0.2" y="2.4" width="5.6" height="1.3" fill="#e03c3c"/></svg>
<div class="a" style="left:293.5px;top:85.8px;width:122.1px;height:34.8px;background:#ffffff;border:0.5px solid #c8c8c8"></div>
<div class="a" style="left:352.5px;top:86.3px;width:0;height:12px;border-left:0.5px solid #e0e0e0"></div>
<div class="a" style="left:406px;top:86.3px;width:0;height:24px;border-left:0.5px solid #e8e8e8"></div>
<div class="t" style="left:294px;width:58.5px;text-align:center;top:90.10px;font-size:6px">Type</div>
<div class="t" style="left:352.5px;width:53.5px;text-align:center;top:90.10px;font-size:6.1px">Value (mm | deg)</div>
<div class="cmb" style="left:294px;top:99.0px;width:58.00px;height:11.00px;"></div>
<div class="t" style="left:295.6px;top:102.15px;font-size:6.1px;">Normal (N)</div>
<svg class="a" style="left:345.80px;top:103.65px" width="3.4" height="2.3" viewBox="0 0 3.4 2.3"><path d="M0.3 0.3 L1.7 1.7 L3.1 0.3" fill="none" stroke="#8a8a8a" stroke-width="0.5"/></svg>
<div class="cmb" style="left:353px;top:99.0px;width:52.50px;height:11.00px;background:#ffffff;"></div>
<div class="t" style="left:354.8px;top:102.25px;font-size:5.9px;">100.000</div>
<div class="a" style="left:399.50px;top:99.50px;width:5.5px;height:10.00px;background:#dedede;border-left:0.4px solid #cfcfcf"></div>
<svg class="a" style="left:399.50px;top:99.00px" width="6" height="11.00" viewBox="0 0 6 11.00"><path d="M1.25 4.80 L2.75 3.10 L4.25 4.80Z M1.25 6.20 L2.75 7.90 L4.25 6.20Z" fill="#222"/></svg>
<div class="t" style="left:295px;top:125.88px;font-size:5.880px;transform:scaleX(0.8929);transform-origin:left center;">Retract</div>
<div class="btn" style="left:350.8px;top:123.0px;width:11.20px;height:9.60px;background:#f6f6f6;border-color:#e0e0e0;"></div>
<svg class="a" style="left:353.40px;top:124.80px" width="6" height="6" viewBox="0 0 6 6"><rect x="0.7" y="0.6" width="3.6" height="4" fill="#e8e8e8" stroke="#c8c8c8" stroke-width="0.4"/><rect x="1.7" y="1.6" width="3.6" height="4" fill="#ececec" stroke="#c4c4c4" stroke-width="0.4"/></svg>
<div class="btn" style="left:365px;top:123.0px;width:11.60px;height:9.60px;background:#f6f6f6;border-color:#e0e0e0;"></div>
<svg class="a" style="left:367.80px;top:124.60px" width="6" height="6.5" viewBox="0 0 6 6.5"><rect x="0.8" y="0.8" width="3.6" height="5" fill="#f1c48a" stroke="#c8843a" stroke-width="0.5"/><rect x="2.2" y="2" width="3" height="4" fill="#fff" stroke="#d0d0d0" stroke-width="0.4"/><rect x="1.5" y="0.3" width="2" height="1" fill="#999"/></svg>
<div class="btn" style="left:388px;top:123.0px;width:10.70px;height:9.60px;background:#f6f6f6;border-color:#e0e0e0;"></div>
<svg class="a" style="left:390.35px;top:124.80px" width="6" height="6" viewBox="0 0 6 6"><rect x="0.2" y="2.4" width="5.6" height="1.3" fill="#1f6fc5"/><rect x="2.35" y="0.2" width="1.3" height="5.6" fill="#1f6fc5"/></svg>
<div class="btn" style="left:402px;top:123.0px;width:11.00px;height:9.60px;background:#f6f6f6;border-color:#e0e0e0;"></div>
<svg class="a" style="left:404.50px;top:124.80px" width="6" height="6" viewBox="0 0 6 6"><rect x="0.2" y="2.4" width="5.6" height="1.3" fill="#e03c3c"/></svg>
<div class="a" style="left:293.5px;top:133.6px;width:122.1px;height:34.8px;background:#ffffff;border:0.5px solid #c8c8c8"></div>
<div class="a" style="left:352.5px;top:134.1px;width:0;height:12px;border-left:0.5px solid #e0e0e0"></div>
<div class="a" style="left:406px;top:134.1px;width:0;height:24px;border-left:0.5px solid #e8e8e8"></div>
<div class="t" style="left:294px;width:58.5px;text-align:center;top:137.90px;font-size:6px">Type</div>
<div class="t" style="left:352.5px;width:53.5px;text-align:center;top:137.90px;font-size:6.1px">Value (mm | deg)</div>
<div class="cmb" style="left:294px;top:146.79999999999998px;width:58.00px;height:11.00px;"></div>
<div class="t" style="left:295.6px;top:149.95px;font-size:6.1px;">Normal (N)</div>
<svg class="a" style="left:345.80px;top:151.45px" width="3.4" height="2.3" viewBox="0 0 3.4 2.3"><path d="M0.3 0.3 L1.7 1.7 L3.1 0.3" fill="none" stroke="#8a8a8a" stroke-width="0.5"/></svg>
<div class="cmb" style="left:353px;top:146.79999999999998px;width:52.50px;height:11.00px;background:#ffffff;"></div>
<div class="t" style="left:354.8px;top:150.05px;font-size:5.9px;">100.000</div>
<div class="a" style="left:399.50px;top:147.30px;width:5.5px;height:10.00px;background:#dedede;border-left:0.4px solid #cfcfcf"></div>
<svg class="a" style="left:399.50px;top:146.80px" width="6" height="11.00" viewBox="0 0 6 11.00"><path d="M1.25 4.80 L2.75 3.10 L4.25 4.80Z M1.25 6.20 L2.75 7.90 L4.25 6.20Z" fill="#222"/></svg>
<div class="t" style="left:130px;top:180.57px;font-size:5.880px;transform:scaleX(0.8929);transform-origin:left center;">Path to tool offset:</div>
<div class="a" style="left:174.7px;top:183.6px;width:240.3px;height:10px;background:#fff;border:0.5px solid #dcdcdc"></div>
<div class="cmb" style="left:174.7px;top:173.2px;width:196.30px;height:9.60px;"></div>
<div class="t" style="left:176.2px;top:176.83px;font-size:4.73px;font-family:'Liberation Mono',monospace;">Script (mm,deg) transl(x,y,z)*rotz(rz)*...</div>
<svg class="a" style="left:364.80px;top:177.15px" width="3.4" height="2.3" viewBox="0 0 3.4 2.3"><path d="M0.3 0.3 L1.7 1.7 L3.1 0.3" fill="none" stroke="#8a8a8a" stroke-width="0.5"/></svg>
<div class="t" style="left:176.2px;top:187.63px;font-size:4.73px;font-family:'Liberation Mono',monospace;">rotz(0)</div>
<div class="btn" style="left:373.7px;top:172.9px;width:11.80px;height:9.60px;background:#f6f6f6;border-color:#e0e0e0;"></div>
<svg class="a" style="left:376.60px;top:174.70px" width="6" height="6" viewBox="0 0 6 6"><rect x="0.7" y="0.6" width="3.6" height="4" fill="#e8e8e8" stroke="#c8c8c8" stroke-width="0.4"/><rect x="1.7" y="1.6" width="3.6" height="4" fill="#ececec" stroke="#c4c4c4" stroke-width="0.4"/></svg>
<div class="btn" style="left:388px;top:172.9px;width:12.00px;height:9.60px;background:#f6f6f6;border-color:#e0e0e0;"></div>
<svg class="a" style="left:391.00px;top:174.50px" width="6" height="6.5" viewBox="0 0 6 6.5"><rect x="0.8" y="0.8" width="3.6" height="5" fill="#f1c48a" stroke="#c8843a" stroke-width="0.5"/><rect x="2.2" y="2" width="3" height="4" fill="#fff" stroke="#d0d0d0" stroke-width="0.4"/><rect x="1.5" y="0.3" width="2" height="1" fill="#999"/></svg>
<div class="btn" style="left:402.7px;top:172.9px;width:11.80px;height:9.60px;background:#fbfbfb;border-color:#dcdcdc;"></div>
<svg class="a" style="left:405.10px;top:174.70px" width="7" height="6" viewBox="0 0 7 6"><rect x="0" y="0.5" width="7" height="1.2" fill="#111"/><rect x="0" y="2.4" width="7" height="1.2" fill="#111"/><rect x="0" y="4.3" width="7" height="1.2" fill="#111"/></svg>
<div class="t" style="left:130px;top:198.88px;font-size:5.880px;transform:scaleX(0.8929);transform-origin:left center;">Select algorithm:</div>
<div class="cmb" style="left:171.5px;top:196px;width:89.50px;height:8.60px;"></div>
<div class="t" style="left:173px;top:198.38px;font-size:5.880px;transform:scaleX(0.8929);transform-origin:left center;">Minimum tool orientation change</div>
<svg class="a" style="left:254.80px;top:199.45px" width="3.4" height="2.3" viewBox="0 0 3.4 2.3"><path d="M0.3 0.3 L1.7 1.7 L3.1 0.3" fill="none" stroke="#8a8a8a" stroke-width="0.5"/></svg>
<div class="btn" style="left:263.9px;top:195.4px;width:36.10px;height:10.10px;"></div>
<div class="t" style="left:263.9px;width:36.10px;text-align:center;top:198.52px;font-size:5.880px;transform:scaleX(0.8929);transform-origin:center center;">Teach</div>
<div class="btn" style="left:302.5px;top:195.4px;width:12.20px;height:10.10px;background:#cce4f7;border-color:#4a90d0;"></div>
<div class="a" style="left:305.4px;top:199.7px;width:6.4px;height:1.4px;background:#e03c3c"></div>
<div class="btn" style="left:344px;top:195.4px;width:71.00px;height:10.10px;background:#cce4f7;border-color:#4a90d0;"></div>
<div class="a" style="left:345.7px;top:197.3px;width:6.6px;height:6.6px;border-radius:50%;background:radial-gradient(circle at 35% 35%,#7be05a,#2a9a10)"></div>
<div class="t" style="left:354px;top:198.67px;font-size:5.880px;transform:scaleX(0.8929);transform-origin:left center;">Show preferred tool path</div>
<div class="grp" style="left:131.3px;top:212.6px;width:287.5px;height:23.6px"></div>
<div class="a" style="left:134px;top:210px;width:52px;height:5px;background:#f0f0f0"></div>
<div class="t" style="left:134.5px;top:210.47px;font-size:5.880px;transform:scaleX(0.8929);transform-origin:left center;">Preferred orientation</div>
<div class="t" style="left:135px;top:224.67px;font-size:5.880px;transform:scaleX(0.8929);transform-origin:left center;">Preferred tool X axis</div>
<div class="cmb" style="left:185.9px;top:221.8px;width:60.70px;height:9.00px;background:#b0ffb0;"></div>
<div class="t" style="left:185.9px;width:53.20px;text-align:right;top:224.38px;font-size:5.880px;transform:scaleX(0.8929);transform-origin:right center;">90.00 deg</div>
<div class="a" style="left:240.60px;top:222.30px;width:5.5px;height:8.00px;background:#dedede;border-left:0.4px solid #cfcfcf"></div>
<svg class="a" style="left:240.60px;top:221.80px" width="6" height="9.00" viewBox="0 0 6 9.00"><path d="M1.25 3.80 L2.75 2.10 L4.25 3.80Z M1.25 5.20 L2.75 6.90 L4.25 5.20Z" fill="#222"/></svg>
<div class="cmb" style="left:248.3px;top:221.8px;width:59.70px;height:9.00px;background:#b0b0ff;"></div>
<div class="t" style="left:248.3px;width:52.20px;text-align:right;top:224.38px;font-size:5.880px;transform:scaleX(0.8929);transform-origin:right center;">180.00 deg</div>
<div class="a" style="left:302.00px;top:222.30px;width:5.5px;height:8.00px;background:#dedede;border-left:0.4px solid #cfcfcf"></div>
<svg class="a" style="left:302.00px;top:221.80px" width="6" height="9.00" viewBox="0 0 6 9.00"><path d="M1.25 3.80 L2.75 2.10 L4.25 3.80Z M1.25 5.20 L2.75 6.90 L4.25 5.20Z" fill="#222"/></svg>
<div class="btn" style="left:311px;top:221.3px;width:11.00px;height:10.00px;background:#f6f6f6;border-color:#e0e0e0;"></div>
<svg class="a" style="left:313.50px;top:223.30px" width="6" height="6" viewBox="0 0 6 6"><rect x="0.7" y="0.6" width="3.6" height="4" fill="#e8e8e8" stroke="#c8c8c8" stroke-width="0.4"/><rect x="1.7" y="1.6" width="3.6" height="4" fill="#ececec" stroke="#c4c4c4" stroke-width="0.4"/></svg>
<div class="btn" style="left:324.4px;top:221.3px;width:11.60px;height:10.00px;background:#f6f6f6;border-color:#e0e0e0;"></div>
<svg class="a" style="left:327.20px;top:223.10px" width="6" height="6.5" viewBox="0 0 6 6.5"><rect x="0.8" y="0.8" width="3.6" height="5" fill="#f1c48a" stroke="#c8843a" stroke-width="0.5"/><rect x="2.2" y="2" width="3" height="4" fill="#fff" stroke="#d0d0d0" stroke-width="0.4"/><rect x="1.5" y="0.3" width="2" height="1" fill="#999"/></svg>
<div class="btn" style="left:340.5px;top:221.3px;width:15.00px;height:10.00px;"></div>
<div class="t" style="left:340.5px;width:15.00px;text-align:center;top:224.38px;font-size:5.880px;transform:scaleX(0.8929);transform-origin:center center;">-X</div>
<div class="btn" style="left:359px;top:221.3px;width:15.00px;height:10.00px;"></div>
<div class="t" style="left:359px;width:15.00px;text-align:center;top:224.38px;font-size:5.880px;transform:scaleX(0.8929);transform-origin:center center;">+Z</div>
<div class="btn" style="left:378.5px;top:221.3px;width:15.00px;height:10.00px;"></div>
<div class="t" style="left:378.5px;width:15.00px;text-align:center;top:224.38px;font-size:5.880px;transform:scaleX(0.8929);transform-origin:center center;">Def.</div>
<svg class="a" style="left:399.8px;top:222.6px" width="7" height="7" viewBox="0 0 7 7"><rect x="0" y="2.75" width="7" height="1.5" fill="#1f6fc5"/><rect x="2.75" y="0" width="1.5" height="7" fill="#1f6fc5"/></svg>
<div class="t" style="left:130.7px;top:249.57px;font-size:5.880px;transform:scaleX(0.8929);transform-origin:left center;">Frame offset:</div>
<div class="cmb" style="left:163px;top:243px;width:207.50px;height:7.70px;"></div>
<div class="t" style="left:164.4px;top:245.66px;font-size:4.78px;font-family:'Liberation Mono',monospace;">[X,Y,Z]mm | Rot[Z,Y',X'']deg - ABB/KUKA/Nachi</div>
<svg class="a" style="left:364.30px;top:246.00px" width="3.4" height="2.3" viewBox="0 0 3.4 2.3"><path d="M0.3 0.3 L1.7 1.7 L3.1 0.3" fill="none" stroke="#8a8a8a" stroke-width="0.5"/></svg>
<div class="btn" style="left:373px;top:241.8px;width:12.50px;height:9.70px;background:#f6f6f6;border-color:#e0e0e0;"></div>
<svg class="a" style="left:376.25px;top:243.65px" width="6" height="6" viewBox="0 0 6 6"><rect x="0.7" y="0.6" width="3.6" height="4" fill="#e8e8e8" stroke="#c8c8c8" stroke-width="0.4"/><rect x="1.7" y="1.6" width="3.6" height="4" fill="#ececec" stroke="#c4c4c4" stroke-width="0.4"/></svg>
<div class="btn" style="left:388px;top:241.8px;width:12.00px;height:9.70px;background:#f6f6f6;border-color:#e0e0e0;"></div>
<svg class="a" style="left:391.00px;top:243.45px" width="6" height="6.5" viewBox="0 0 6 6.5"><rect x="0.8" y="0.8" width="3.6" height="5" fill="#f1c48a" stroke="#c8843a" stroke-width="0.5"/><rect x="2.2" y="2" width="3" height="4" fill="#fff" stroke="#d0d0d0" stroke-width="0.4"/><rect x="1.5" y="0.3" width="2" height="1" fill="#999"/></svg>
<div class="btn" style="left:402.7px;top:241.8px;width:11.80px;height:9.70px;background:#fbfbfb;border-color:#dcdcdc;"></div>
<svg class="a" style="left:405.10px;top:243.65px" width="7" height="6" viewBox="0 0 7 6"><rect x="0" y="0.5" width="7" height="1.2" fill="#111"/><rect x="0" y="2.4" width="7" height="1.2" fill="#111"/><rect x="0" y="4.3" width="7" height="1.2" fill="#111"/></svg>
<div class="a" style="left:163px;top:252.40px;width:41.60px;height:9px;background:#ffaaaa"></div>
<div class="t" style="left:163px;width:39.90px;text-align:right;top:255.50px;font-size:4.8px;font-family:'Liberation Mono',monospace;font-weight:bold;color:#222">0.000</div>
<div class="a" style="left:204.6px;top:252.40px;width:42.50px;height:9px;background:#aaffaa"></div>
<div class="t" style="left:204.6px;width:40.80px;text-align:right;top:255.50px;font-size:4.8px;font-family:'Liberation Mono',monospace;font-weight:bold;color:#222">0.000</div>
<div class="a" style="left:247.1px;top:252.40px;width:41.90px;height:9px;background:#aaaaff"></div>
<div class="t" style="left:247.1px;width:40.20px;text-align:right;top:255.50px;font-size:4.8px;font-family:'Liberation Mono',monospace;font-weight:bold;color:#222">0.000</div>
<div class="a" style="left:289px;top:252.40px;width:41.80px;height:9px;background:#aaffff"></div>
<div class="t" style="left:289px;width:40.10px;text-align:right;top:255.50px;font-size:4.8px;font-family:'Liberation Mono',monospace;font-weight:bold;color:#222">0.000</div>
<div class="a" style="left:330.8px;top:252.40px;width:42.20px;height:9px;background:#ffaaff"></div>
<div class="t" style="left:330.8px;width:40.50px;text-align:right;top:255.50px;font-size:4.8px;font-family:'Liberation Mono',monospace;font-weight:bold;color:#222">0.000</div>
<div class="a" style="left:373px;top:252.40px;width:42.00px;height:9px;background:#ffffaa"></div>
<div class="t" style="left:373px;width:40.30px;text-align:right;top:255.50px;font-size:4.8px;font-family:'Liberation Mono',monospace;font-weight:bold;color:#222">0.000</div>
<div class="t" style="left:130.7px;top:270.68px;font-size:5.880px;transform:scaleX(0.8929);transform-origin:left center;">Tool offset:</div>
<div class="cmb" style="left:163px;top:264.2px;width:207.50px;height:7.70px;"></div>
<div class="t" style="left:164.4px;top:266.86px;font-size:4.78px;font-family:'Liberation Mono',monospace;">[X,Y,Z]mm | Rot[Z,Y',X'']deg - ABB/KUKA/Nachi</div>
<svg class="a" style="left:364.30px;top:267.20px" width="3.4" height="2.3" viewBox="0 0 3.4 2.3"><path d="M0.3 0.3 L1.7 1.7 L3.1 0.3" fill="none" stroke="#8a8a8a" stroke-width="0.5"/></svg>
<div class="btn" style="left:373px;top:263.0px;width:12.50px;height:9.70px;background:#f6f6f6;border-color:#e0e0e0;"></div>
<svg class="a" style="left:376.25px;top:264.85px" width="6" height="6" viewBox="0 0 6 6"><rect x="0.7" y="0.6" width="3.6" height="4" fill="#e8e8e8" stroke="#c8c8c8" stroke-width="0.4"/><rect x="1.7" y="1.6" width="3.6" height="4" fill="#ececec" stroke="#c4c4c4" stroke-width="0.4"/></svg>
<div class="btn" style="left:388px;top:263.0px;width:12.00px;height:9.70px;background:#f6f6f6;border-color:#e0e0e0;"></div>
<svg class="a" style="left:391.00px;top:264.65px" width="6" height="6.5" viewBox="0 0 6 6.5"><rect x="0.8" y="0.8" width="3.6" height="5" fill="#f1c48a" stroke="#c8843a" stroke-width="0.5"/><rect x="2.2" y="2" width="3" height="4" fill="#fff" stroke="#d0d0d0" stroke-width="0.4"/><rect x="1.5" y="0.3" width="2" height="1" fill="#999"/></svg>
<div class="btn" style="left:402.7px;top:263.0px;width:11.80px;height:9.70px;background:#fbfbfb;border-color:#dcdcdc;"></div>
<svg class="a" style="left:405.10px;top:264.85px" width="7" height="6" viewBox="0 0 7 6"><rect x="0" y="0.5" width="7" height="1.2" fill="#111"/><rect x="0" y="2.4" width="7" height="1.2" fill="#111"/><rect x="0" y="4.3" width="7" height="1.2" fill="#111"/></svg>
<div class="a" style="left:163px;top:273.60px;width:41.60px;height:9px;background:#ffaaaa"></div>
<div class="t" style="left:163px;width:39.90px;text-align:right;top:276.70px;font-size:4.8px;font-family:'Liberation Mono',monospace;font-weight:bold;color:#222">0.000</div>
<div class="a" style="left:204.6px;top:273.60px;width:42.50px;height:9px;background:#aaffaa"></div>
<div class="t" style="left:204.6px;width:40.80px;text-align:right;top:276.70px;font-size:4.8px;font-family:'Liberation Mono',monospace;font-weight:bold;color:#222">0.000</div>
<div class="a" style="left:247.1px;top:273.60px;width:41.90px;height:9px;background:#aaaaff"></div>
<div class="t" style="left:247.1px;width:40.20px;text-align:right;top:276.70px;font-size:4.8px;font-family:'Liberation Mono',monospace;font-weight:bold;color:#222">0.000</div>
<div class="a" style="left:289px;top:273.60px;width:41.80px;height:9px;background:#aaffff"></div>
<div class="t" style="left:289px;width:40.10px;text-align:right;top:276.70px;font-size:4.8px;font-family:'Liberation Mono',monospace;font-weight:bold;color:#222">0.000</div>
<div class="a" style="left:330.8px;top:273.60px;width:42.20px;height:9px;background:#ffaaff"></div>
<div class="t" style="left:330.8px;width:40.50px;text-align:right;top:276.70px;font-size:4.8px;font-family:'Liberation Mono',monospace;font-weight:bold;color:#222">0.000</div>
<div class="a" style="left:373px;top:273.60px;width:42.00px;height:9px;background:#ffffaa"></div>
<div class="t" style="left:373px;width:40.30px;text-align:right;top:276.70px;font-size:4.8px;font-family:'Liberation Mono',monospace;font-weight:bold;color:#222">0.000</div>
<svg class="a" style="left:0;top:0" width="746" height="400" viewBox="0 0 746 400"><path d="M290.6 273.4 L417.4 275.2 L417.6 287.9 L288.6 286.9 Z" fill="none" stroke="#0a6fd0" stroke-width="2.2"/></svg>
<div class="grp" style="left:131.3px;top:289px;width:283.2px;height:36.7px"></div>
<div class="a" style="left:134px;top:286.5px;width:57px;height:5px;background:#f0f0f0"></div>
<div class="t" style="left:134.5px;top:287.07px;font-size:5.880px;transform:scaleX(0.8929);transform-origin:left center;">Optimization parameters</div>
<div class="btn" style="left:135.5px;top:297.8px;width:36.50px;height:9.90px;"></div>
<div class="t" style="left:135.5px;width:36.50px;text-align:center;top:300.82px;font-size:5.880px;transform:scaleX(0.8929);transform-origin:center center;">Set default</div>
<div class="btn" style="left:338px;top:298px;width:72.00px;height:10.00px;"></div>
<div class="a" style="left:339.6px;top:300px;width:6px;height:6px;border-radius:50%;border:0.5px solid #333;background:#fff"></div>
<div class="t" style="left:348px;top:301.07px;font-size:5.880px;transform:scaleX(0.8929);transform-origin:left center;">Show estimated tool path</div>
<div class="t" style="left:135px;top:315.07px;font-size:5.880px;transform:scaleX(0.8929);transform-origin:left center;">Allow a tool Z rotation of +/-</div>
<div class="cmb" style="left:204.5px;top:312.5px;width:25.50px;height:8.50px;background:#ffffff;"></div>
<div class="t" style="left:205.8px;top:314.82px;font-size:5.880px;transform:scaleX(0.8929);transform-origin:left center;">180.00</div>
<div class="a" style="left:224.00px;top:313.00px;width:5.5px;height:7.50px;background:#dedede;border-left:0.4px solid #cfcfcf"></div>
<svg class="a" style="left:224.00px;top:312.50px" width="6" height="8.50" viewBox="0 0 6 8.50"><path d="M1.25 3.55 L2.75 1.85 L4.25 3.55Z M1.25 4.95 L2.75 6.65 L4.25 4.95Z" fill="#222"/></svg>
<div class="t" style="left:233.7px;top:315.07px;font-size:5.880px;transform:scaleX(0.8929);transform-origin:left center;">deg by steps of</div>
<div class="cmb" style="left:272.5px;top:312.5px;width:25.00px;height:8.50px;background:#ffffff;"></div>
<div class="t" style="left:275px;top:314.82px;font-size:5.880px;transform:scaleX(0.8929);transform-origin:left center;">20.00</div>
<div class="a" style="left:291.50px;top:313.00px;width:5.5px;height:7.50px;background:#dedede;border-left:0.4px solid #cfcfcf"></div>
<svg class="a" style="left:291.50px;top:312.50px" width="6" height="8.50" viewBox="0 0 6 8.50"><path d="M1.25 3.55 L2.75 1.85 L4.25 3.55Z M1.25 4.95 L2.75 6.65 L4.25 4.95Z" fill="#222"/></svg>
<div class="t" style="left:301.2px;top:315.07px;font-size:5.880px;transform:scaleX(0.8929);transform-origin:left center;">deg</div>
<div class="grp" style="left:131.3px;top:332.5px;width:283.2px;height:36.2px"></div>
<div class="a" style="left:134px;top:330px;width:80px;height:5px;background:#f0f0f0"></div>
<div class="t" style="left:134.5px;top:330.77px;font-size:5.880px;transform:scaleX(0.8929);transform-origin:left center;">Preferred joints for the start point</div>
<div class="btn" style="left:135.5px;top:342px;width:36.50px;height:9.00px;"></div>
<div class="t" style="left:135.5px;width:36.50px;text-align:center;top:344.57px;font-size:5.880px;transform:scaleX(0.8929);transform-origin:center center;">Set current</div>
<div class="cmb" style="left:173.7px;top:342px;width:33.80px;height:9.00px;background:#ffffff;"></div>
<div class="t" style="left:175.0px;top:344.57px;font-size:5.880px;transform:scaleX(0.8929);transform-origin:left center;">0.0000</div>
<div class="a" style="left:201.50px;top:342.50px;width:5.5px;height:8.00px;background:#dedede;border-left:0.4px solid #cfcfcf"></div>
<svg class="a" style="left:201.50px;top:342.00px" width="6" height="9.00" viewBox="0 0 6 9.00"><path d="M1.25 3.80 L2.75 2.10 L4.25 3.80Z M1.25 5.20 L2.75 6.90 L4.25 5.20Z" fill="#222"/></svg>
<div class="cmb" style="left:208.7px;top:342px;width:33.10px;height:9.00px;background:#ffffff;"></div>
<div class="t" style="left:210.0px;top:344.57px;font-size:5.880px;transform:scaleX(0.8929);transform-origin:left center;">-90.0000</div>
<div class="a" style="left:235.80px;top:342.50px;width:5.5px;height:8.00px;background:#dedede;border-left:0.4px solid #cfcfcf"></div>
<svg class="a" style="left:235.80px;top:342.00px" width="6" height="9.00" viewBox="0 0 6 9.00"><path d="M1.25 3.80 L2.75 2.10 L4.25 3.80Z M1.25 5.20 L2.75 6.90 L4.25 5.20Z" fill="#222"/></svg>
<div class="cmb" style="left:243px;top:342px;width:33.00px;height:9.00px;background:#ffffff;"></div>
<div class="t" style="left:244.3px;top:344.57px;font-size:5.880px;transform:scaleX(0.8929);transform-origin:left center;">90.0000</div>
<div class="a" style="left:270.00px;top:342.50px;width:5.5px;height:8.00px;background:#dedede;border-left:0.4px solid #cfcfcf"></div>
<svg class="a" style="left:270.00px;top:342.00px" width="6" height="9.00" viewBox="0 0 6 9.00"><path d="M1.25 3.80 L2.75 2.10 L4.25 3.80Z M1.25 5.20 L2.75 6.90 L4.25 5.20Z" fill="#222"/></svg>
<div class="cmb" style="left:277.5px;top:342px;width:33.50px;height:9.00px;background:#ffffff;"></div>
<div class="t" style="left:278.8px;top:344.57px;font-size:5.880px;transform:scaleX(0.8929);transform-origin:left center;">0.0000</div>
<div class="a" style="left:305.00px;top:342.50px;width:5.5px;height:8.00px;background:#dedede;border-left:0.4px solid #cfcfcf"></div>
<svg class="a" style="left:305.00px;top:342.00px" width="6" height="9.00" viewBox="0 0 6 9.00"><path d="M1.25 3.80 L2.75 2.10 L4.25 3.80Z M1.25 5.20 L2.75 6.90 L4.25 5.20Z" fill="#222"/></svg>
<div class="cmb" style="left:312.5px;top:342px;width:33.50px;height:9.00px;background:#ffffff;"></div>
<div class="t" style="left:313.8px;top:344.57px;font-size:5.880px;transform:scaleX(0.8929);transform-origin:left center;">0.0000</div>
<div class="a" style="left:340.00px;top:342.50px;width:5.5px;height:8.00px;background:#dedede;border-left:0.4px solid #cfcfcf"></div>
<svg class="a" style="left:340.00px;top:342.00px" width="6" height="9.00" viewBox="0 0 6 9.00"><path d="M1.25 3.80 L2.75 2.10 L4.25 3.80Z M1.25 5.20 L2.75 6.90 L4.25 5.20Z" fill="#222"/></svg>
<div class="cmb" style="left:347px;top:342px;width:33.00px;height:9.00px;background:#ffffff;"></div>
<div class="t" style="left:348.3px;top:344.57px;font-size:5.880px;transform:scaleX(0.8929);transform-origin:left center;">0.0000</div>
<div class="a" style="left:374.00px;top:342.50px;width:5.5px;height:8.00px;background:#dedede;border-left:0.4px solid #cfcfcf"></div>
<svg class="a" style="left:374.00px;top:342.00px" width="6" height="9.00" viewBox="0 0 6 9.00"><path d="M1.25 3.80 L2.75 2.10 L4.25 3.80Z M1.25 5.20 L2.75 6.90 L4.25 5.20Z" fill="#222"/></svg>
<div class="btn" style="left:382.5px;top:341.8px;width:11.20px;height:9.40px;background:#f6f6f6;border-color:#e0e0e0;"></div>
<svg class="a" style="left:385.10px;top:343.50px" width="6" height="6" viewBox="0 0 6 6"><rect x="0.7" y="0.6" width="3.6" height="4" fill="#e8e8e8" stroke="#c8c8c8" stroke-width="0.4"/><rect x="1.7" y="1.6" width="3.6" height="4" fill="#ececec" stroke="#c4c4c4" stroke-width="0.4"/></svg>
<div class="btn" style="left:396px;top:341.8px;width:11.50px;height:9.40px;background:#f6f6f6;border-color:#e0e0e0;"></div>
<svg class="a" style="left:398.75px;top:343.30px" width="6" height="6.5" viewBox="0 0 6 6.5"><rect x="0.8" y="0.8" width="3.6" height="5" fill="#f1c48a" stroke="#c8843a" stroke-width="0.5"/><rect x="2.2" y="2" width="3" height="4" fill="#fff" stroke="#d0d0d0" stroke-width="0.4"/><rect x="1.5" y="0.3" width="2" height="1" fill="#999"/></svg>
<div class="btn" style="left:135.5px;top:355px;width:36.50px;height:9.00px;"></div>
<div class="t" style="left:135.5px;width:36.50px;text-align:center;top:357.57px;font-size:5.880px;transform:scaleX(0.8929);transform-origin:center center;">Set default</div>
<div class="cmb" style="left:174px;top:355px;width:236.00px;height:9.00px;"></div>
<svg class="a" style="left:403.80px;top:358.65px" width="3.4" height="2.3" viewBox="0 0 3.4 2.3"><path d="M0.3 0.3 L1.7 1.7 L3.1 0.3" fill="none" stroke="#8a8a8a" stroke-width="0.5"/></svg>
<div class="t" style="left:160px;width:40px;text-align:right;top:358.34px;font-size:4.73px;font-family:'Liberation Mono',monospace">-22.4,</div>
<div class="t" style="left:185px;width:40px;text-align:right;top:358.34px;font-size:4.73px;font-family:'Liberation Mono',monospace">-32.7,</div>
<div class="t" style="left:210px;width:40px;text-align:right;top:358.34px;font-size:4.73px;font-family:'Liberation Mono',monospace">30.5,</div>
<div class="t" style="left:236px;width:40px;text-align:right;top:358.34px;font-size:4.73px;font-family:'Liberation Mono',monospace">37.5,</div>
<div class="t" style="left:262.5px;width:40px;text-align:right;top:358.34px;font-size:4.73px;font-family:'Liberation Mono',monospace">38.3,</div>
<div class="t" style="left:286px;width:40px;text-align:right;top:358.34px;font-size:4.73px;font-family:'Liberation Mono',monospace">-137.0</div>
<svg class="a" style="left:129.7px;top:373.4px" width="6.60" height="6.60" viewBox="0 0 10 10" preserveAspectRatio="none"><rect x="0" y="0" width="10" height="10" rx="2" fill="#1565c0"/><path d="M2.6 5.2 L4.3 6.9 L7.5 3.2" fill="none" stroke="#fff" stroke-width="1"/></svg>
<div class="t" style="left:139.5px;top:374.88px;font-size:5.880px;transform:scaleX(0.8929);transform-origin:left center;">Auto update</div>
<div class="t" style="left:130px;top:386.68px;font-size:5.880px;transform:scaleX(0.8929);transform-origin:left center;">Path solved successfully.</div>
<div class="a" style="left:313.5px;top:373px;width:19px;height:19px;border-radius:50%;background:radial-gradient(circle at 40% 30%,#9ef58a,#24b024 60%,#158a15)"></div>
<svg class="a" style="left:313.5px;top:373px" width="19" height="19" viewBox="0 0 19 19"><path d="M5 9.5 L8.3 13.5 L14.5 5.5" fill="none" stroke="#fff" stroke-width="2.4" stroke-linejoin="round"/></svg>
<div class="btn" style="left:337.5px;top:373px;width:36.50px;height:19.00px;"></div>
<div class="t" style="left:337.5px;width:36.50px;text-align:center;top:380.57px;font-size:5.880px;transform:scaleX(0.8929);transform-origin:center center;">Update</div>
<div class="btn" style="left:378px;top:373px;width:36.50px;height:19.00px;"></div>
<div class="t" style="left:378px;width:36.50px;text-align:center;top:380.57px;font-size:5.880px;transform:scaleX(0.8929);transform-origin:center center;">Simulate</div>
</body></html>
